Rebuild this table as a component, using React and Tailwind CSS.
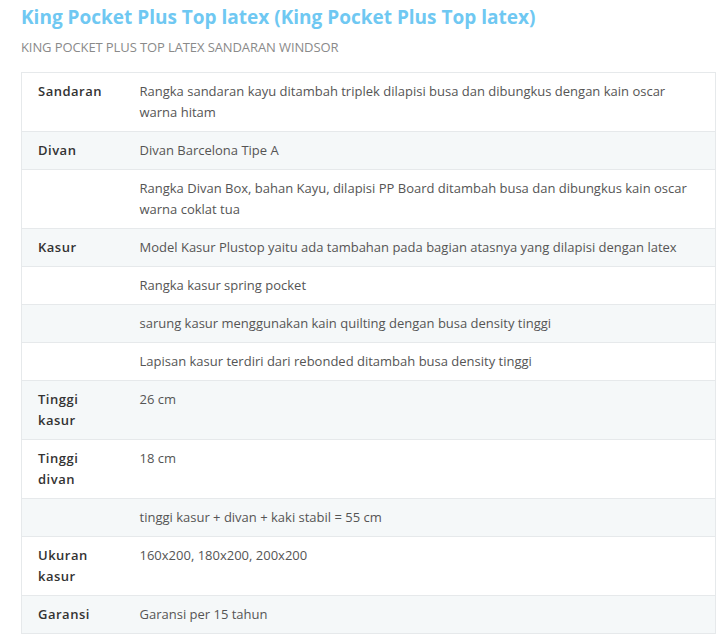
const rows = [
  ['Sandaran', 'Rangka sandaran kayu ditambah triplek dilapisi busa dan dibungkus dengan kain oscar warna hitam'],
  ['Divan', 'Divan Barcelona Tipe A'],
  ['', 'Rangka Divan Box, bahan Kayu, dilapisi PP Board ditambah busa dan dibungkus kain oscar warna coklat tua'],
  ['Kasur', 'Model Kasur Plustop yaitu ada tambahan pada bagian atasnya yang dilapisi dengan latex'],
  ['', 'Rangka kasur spring pocket'],
  ['', 'sarung kasur menggunakan kain quilting dengan busa density tinggi'],
  ['', 'Lapisan kasur terdiri dari rebonded ditambah busa density tinggi'],
  ['Tinggi kasur', '26 cm'],
  ['Tinggi divan', '18 cm'],
  ['', 'tinggi kasur + divan + kaki stabil = 55 cm'],
  ['Ukuran kasur', '160x200, 180x200, 200x200'],
  ['Garansi', 'Garansi per 15 tahun'],
];

export default function App() {
  return (
    <div className="min-h-screen bg-white px-[21px] pt-[3px] font-['Open_Sans',sans-serif]">
      <h1 className="text-[19px] font-bold leading-[28px] text-[#6fc8f2]">
        King Pocket Plus Top latex (King Pocket Plus Top latex)
      </h1>
      <p className="mt-[6px] text-[13px] uppercase leading-[20px] tracking-[-0.1px] text-[#8a8a8a]">
        King Pocket Plus Top latex Sandaran Windsor
      </p>

      <table className="mt-[15px] w-[695px] table-fixed border-collapse border border-[#e6e9eb] text-[13px] leading-[21px]">
        <colgroup>
          <col className="w-[118px]" />
          <col />
        </colgroup>
        <tbody>
          {rows.map(([label, value], i) => (
            <tr key={i} className={`border-t border-[#e6e9eb] ${i % 2 === 1 ? 'bg-[#f5f8f9]' : 'bg-white'}`}>
              <td className="py-2 pl-4 pr-9 align-top font-semibold tracking-[0.5px] text-[#333]">
                {label}
              </td>
              <td className="py-2 pr-4 align-top text-[#555]">
                {value}
              </td>
            </tr>
          ))}
        </tbody>
      </table>
    </div>
  );
}
